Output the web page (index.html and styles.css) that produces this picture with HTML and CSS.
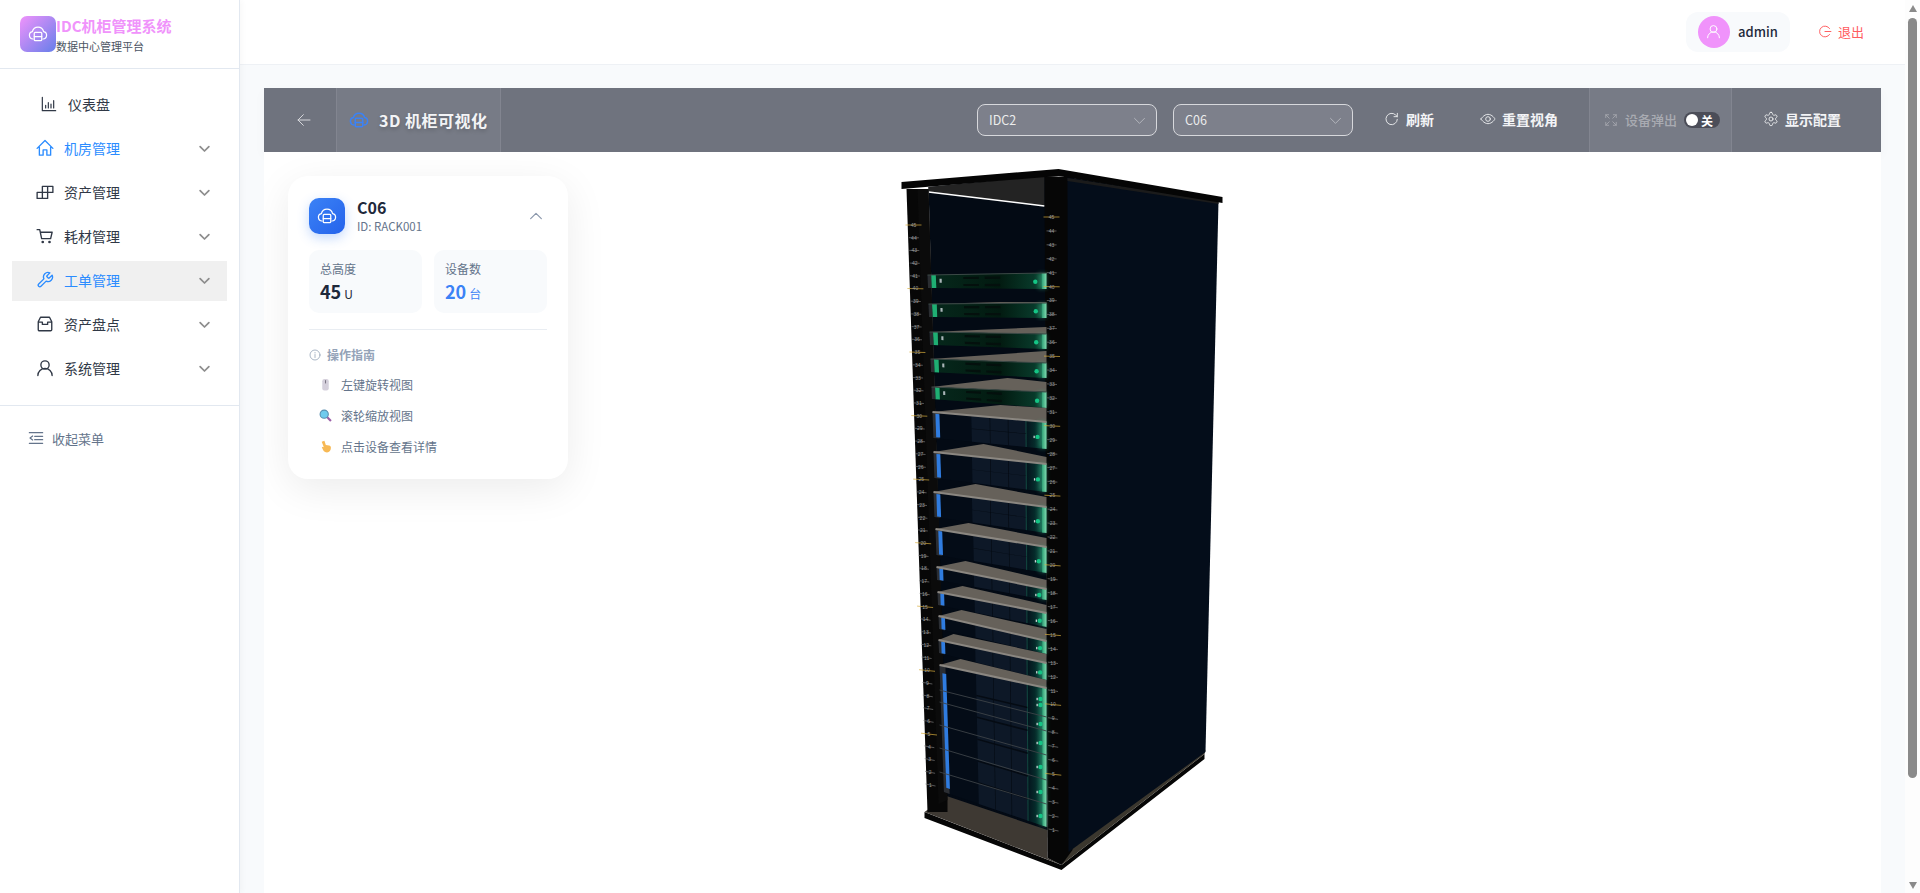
FILE: index.html
```html
<!DOCTYPE html>
<html lang="zh-CN">
<head>
    <meta charset="UTF-8">
    <meta name="viewport" content="width=device-width, initial-scale=1.0">
    <title>3D 机柜可视化</title>
    <link rel="stylesheet" href="styles.css">
</head>
<body>
    <svg class="sprite" aria-hidden="true">
        <symbol id="i-cloud" viewBox="0 0 24 24"><path d="M6 18a4.500 4.500 0 0 1-.7-8.900A6.900 6.900 0 0 1 18.700 9.100 4.500 4.500 0 0 1 18 18"/><rect x="7.500" y="10" width="9" height="10" rx="1.200"/><path d="M7.500 15h9"/></symbol>
        <symbol id="i-chart" viewBox="0 0 24 24"><path d="M2 2v20h20M7 18v-4M11 18v-8M15 18v-6M19 18V7"/></symbol>
        <symbol id="i-home" viewBox="0 0 24 24"><path d="M1.500 12.500 12 2l10.500 10.500M4.500 11v10.500h5v-7h5v7h5V11"/></symbol>
        <symbol id="i-boxes" viewBox="0 0 24 24"><path d="M1.500 12.500h14v8h-14zM8.500 12.500v8M8.500 12.500v-8h14v8h-7M15.500 4.500v8"/></symbol>
        <symbol id="i-cart" viewBox="0 0 24 24"><path d="M1.500 3.500h3.500l2.500 12h12l2-8.500H6"/><circle class="solid" cx="9" cy="20" r="1.800"/><circle class="solid" cx="18" cy="20" r="1.800"/></symbol>
        <symbol id="i-tool" viewBox="0 0 24 24"><path d="M14.700 6.300a1 1 0 0 0 0 1.400l1.600 1.600a1 1 0 0 0 1.400 0l3.770-3.770a6 6 0 0 1-7.940 7.940l-6.910 6.910a2.120 2.120 0 0 1-3-3l6.910-6.910a6 6 0 0 1 7.940-7.940l-3.760 3.760z"/></symbol>
        <symbol id="i-box" viewBox="0 0 24 24"><path d="M6 3h12l3 6v10.500a1.500 1.500 0 0 1-1.500 1.500h-15A1.500 1.500 0 0 1 3 19.500V9zM3 9.500h5.500v3h7v-3H21"/></symbol>
        <symbol id="i-user" viewBox="0 0 24 24"><circle cx="12" cy="8" r="5.500"/><path d="M2.500 22a9.500 9.500 0 0 1 19 0"/></symbol>
        <symbol id="i-down" viewBox="0 0 24 24"><path d="m5 9 7 7 7-7"/></symbol>
        <symbol id="i-up" viewBox="0 0 24 24"><path d="m4 16 8-8 8 8"/></symbol>
        <symbol id="i-fold" viewBox="0 0 24 24"><path d="M2 4h20M10 9.500h12M10 14.500h12M2 20h20M7 9l-4 3 4 3"/></symbol>
        <symbol id="i-logout" viewBox="0 0 24 24"><path d="M19.500 6.500a10 10 0 1 0 0 11M11 12h11"/></symbol>
        <symbol id="i-back" viewBox="0 0 24 24"><path d="M21 12H3M11 4l-8 8 8 8"/></symbol>
        <symbol id="i-refresh" viewBox="0 0 24 24"><path d="M20 12.500a8.500 8.500 0 1 1-2.500-6.500L20 8.500M20 3.500v5h-5"/></symbol>
        <symbol id="i-eye" viewBox="0 0 24 24"><path d="M1.500 12S5.500 5 12 5s10.500 7 10.500 7-4 7-10.500 7S1.500 12 1.500 12z"/><circle cx="12" cy="12" r="3.500"/></symbol>
        <symbol id="i-expand" viewBox="0 0 24 24"><path d="M3 3l6 6M3 8V3h5M21 3l-6 6M16 3h5v5M3 21l6-6M3 16v5h5M21 21l-6-6M16 21h5v-5"/></symbol>
        <symbol id="i-gear" viewBox="0 0 24 24"><path d="M12.220 2h-.44a2 2 0 0 0-2 2v.18a2 2 0 0 1-1 1.730l-.43.25a2 2 0 0 1-2 0l-.15-.08a2 2 0 0 0-2.730.73l-.22.38a2 2 0 0 0 .73 2.730l.15.1a2 2 0 0 1 1 1.720v.51a2 2 0 0 1-1 1.740l-.15.09a2 2 0 0 0-.73 2.730l.22.38a2 2 0 0 0 2.730.73l.15-.08a2 2 0 0 1 2 0l.43.25a2 2 0 0 1 1 1.730V20a2 2 0 0 0 2 2h.44a2 2 0 0 0 2-2v-.18a2 2 0 0 1 1-1.730l.43-.25a2 2 0 0 1 2 0l.15.08a2 2 0 0 0 2.730-.73l.22-.39a2 2 0 0 0-.73-2.730l-.15-.08a2 2 0 0 1-1-1.740v-.5a2 2 0 0 1 1-1.740l.15-.09a2 2 0 0 0 .73-2.730l-.22-.38a2 2 0 0 0-2.730-.73l-.15.08a2 2 0 0 1-2 0l-.43-.25a2 2 0 0 1-1-1.730V4a2 2 0 0 0-2-2z"/><circle cx="12" cy="12" r="3"/></symbol>
        <symbol id="i-info" viewBox="0 0 24 24"><circle cx="12" cy="12" r="10"/><path d="M12 11v6M12 7v1"/></symbol>
    </svg>

    <aside class="sidebar">
        <div class="brand">
            <div class="brand-logo"><svg class="icon"><use href="#i-cloud"/></svg></div>
            <div class="brand-text">
                <div class="brand-title">IDC机柜管理系统</div>
                <div class="brand-sub">数据中心管理平台</div>
            </div>
        </div>
        <nav class="menu">
            <a class="menu-item menu-plain"><svg class="icon menu-icon-small"><use href="#i-chart"/></svg><span>仪表盘</span></a>
            <a class="menu-item is-open"><svg class="icon menu-icon"><use href="#i-home"/></svg><span>机房管理</span><svg class="icon menu-arrow"><use href="#i-down"/></svg></a>
            <a class="menu-item"><svg class="icon menu-icon"><use href="#i-boxes"/></svg><span>资产管理</span><svg class="icon menu-arrow"><use href="#i-down"/></svg></a>
            <a class="menu-item"><svg class="icon menu-icon"><use href="#i-cart"/></svg><span>耗材管理</span><svg class="icon menu-arrow"><use href="#i-down"/></svg></a>
            <a class="menu-item is-open is-hover"><svg class="icon menu-icon"><use href="#i-tool"/></svg><span>工单管理</span><svg class="icon menu-arrow"><use href="#i-down"/></svg></a>
            <a class="menu-item"><svg class="icon menu-icon"><use href="#i-box"/></svg><span>资产盘点</span><svg class="icon menu-arrow"><use href="#i-down"/></svg></a>
            <a class="menu-item"><svg class="icon menu-icon"><use href="#i-user"/></svg><span>系统管理</span><svg class="icon menu-arrow"><use href="#i-down"/></svg></a>
        </nav>
        <div class="collapse-row"><svg class="icon"><use href="#i-fold"/></svg><span>收起菜单</span></div>
    </aside>

    <div class="main">
        <header class="topbar">
            <div class="user-pill">
                <div class="avatar"><svg class="icon"><use href="#i-user"/></svg></div>
                <span class="user-name">admin</span>
            </div>
            <div class="logout"><svg class="icon"><use href="#i-logout"/></svg><span>退出</span></div>
        </header>

        <div class="content">
            <div class="toolbar">
                <div class="tool-back"><svg class="icon"><use href="#i-back"/></svg></div>
                <div class="tool-title"><svg class="icon"><use href="#i-cloud"/></svg><span>3D 机柜可视化</span></div>
                <div class="tool-actions">
                    <div class="select"><span>IDC2</span><svg class="icon"><use href="#i-down"/></svg></div>
                    <div class="select"><span>C06</span><svg class="icon"><use href="#i-down"/></svg></div>
                    <div class="tool-btn tool-refresh"><svg class="icon"><use href="#i-refresh"/></svg><span>刷新</span></div>
                    <div class="tool-btn"><svg class="icon"><use href="#i-eye"/></svg><span>重置视角</span></div>
                    <div class="tool-popup">
                        <svg class="icon"><use href="#i-expand"/></svg>
                        <span class="popup-label">设备弹出</span>
                        <div class="switch"><i></i><span>关</span></div>
                    </div>
                    <div class="tool-btn tool-config"><svg class="icon"><use href="#i-gear"/></svg><span>显示配置</span></div>
                </div>
            </div>

            <div class="stage">
                <div id="rack" class="rack"></div>

                <div class="info-card">
                    <div class="card-head">
                        <div class="card-logo"><svg class="icon"><use href="#i-cloud"/></svg></div>
                        <div class="card-name">
                            <div class="rack-name">C06</div>
                            <div class="rack-id">ID: RACK001</div>
                        </div>
                        <svg class="icon card-toggle"><use href="#i-up"/></svg>
                    </div>
                    <div class="stats">
                        <div class="stat">
                            <div class="stat-label">总高度</div>
                            <div class="stat-value">45<small>U</small></div>
                        </div>
                        <div class="stat stat-blue">
                            <div class="stat-label">设备数</div>
                            <div class="stat-value">20<small>台</small></div>
                        </div>
                    </div>
                    <div class="guide">
                        <div class="guide-title"><svg class="icon"><use href="#i-info"/></svg><span>操作指南</span></div>
                        <div class="guide-row">
                            <svg class="guide-pic" viewBox="0 0 12 12"><rect x="3" y="1" width="6" height="10.500" rx="2" fill="#d5d0dc"/><rect x="5.600" y="2" width="0.900" height="3" fill="#77727f"/></svg>
                            <span>左键旋转视图</span>
                        </div>
                        <div class="guide-row">
                            <svg class="guide-pic" viewBox="0 0 12 12"><path d="m7 7 4 4" stroke="#9b5fa8" stroke-width="2"/><circle cx="4.800" cy="4.800" r="3.800" fill="#6fcbee" stroke="#5a8fb0"/></svg>
                            <span>滚轮缩放视图</span>
                        </div>
                        <div class="guide-row">
                            <svg class="guide-pic" viewBox="0 0 12 12"><path d="M2.500 1.500 5 .8l1.300 3.700 3 .5c1.200.3 1.700 1 1.700 2.200 0 2.300-1.300 4.300-3.600 4.300-1.600 0-2.700-.7-3.500-2L2.600 6.800l1.300-.6.700.7z" fill="#f7b955"/></svg>
                            <span>点击设备查看详情</span>
                        </div>
                    </div>
                </div>
            </div>
        </div>
    </div>

    <div class="scrollbar">
        <i class="scroll-up"></i>
        <div class="scroll-thumb"></div>
        <i class="scroll-down"></i>
    </div>

    <script src="rack.js"></script>
</body>
</html>
```

FILE: styles.css
```css
* {
    box-sizing: border-box;
}
html, body {
    height: 100%;
}
body {
    margin: 0;
    display: flex;
    overflow: hidden;
    font-family: 'Noto Sans CJK SC', 'Noto Sans', sans-serif;
    color: #1e293b;
    background-color: #f8fafc;
}
.sprite {
    position: absolute;
    width: 0;
    height: 0;
}
.icon {
    display: block;
    width: 16px;
    height: 16px;
    fill: none;
    stroke: currentColor;
    stroke-width: 1.8;
    stroke-linecap: round;
    stroke-linejoin: round;
    flex-shrink: 0;
}
.solid {
    fill: currentColor;
    stroke: none;
}

/* sidebar */
.sidebar {
    width: 240px;
    flex-shrink: 0;
    background-color: white;
    border-right: 1px solid #e2e8f0;
    box-shadow: 2px 0 6px rgba(0,0,0,0.03);
    z-index: 2;
}
.brand {
    height: 69px;
    padding: 16px 0 0 20px;
    display: flex;
    border-bottom: 1px solid #e2e8f0;
}
.brand-logo {
    width: 36px;
    height: 36px;
    border-radius: 7px;
    background: linear-gradient(135deg, #f093fb, #667eea);
    color: white;
    display: flex;
    align-items: center;
    justify-content: center;
}
.brand-logo .icon {
    width: 20px;
    height: 20px;
    stroke-width: 1.500;
}
.brand-title {
    font-size: 15px;
    line-height: 20px;
    font-weight: 600;
    color: #f093fb;
}
.brand-sub {
    font-size: 11px;
    line-height: 16px;
    margin-top: 2px;
    color: #4b5563;
}
.menu {
    padding: 16px 0;
    border-bottom: 1px solid #e2e8f0;
    display: flex;
    flex-direction: column;
    gap: 4px;
}
.menu-item {
    height: 40px;
    margin: 0 12px;
    width: 215px;
    padding: 0 15px 2px 24px;
    display: flex;
    align-items: center;
    gap: 10px;
    font-size: 14px;
    color: #303846;
}
.menu-plain {
    padding-left: 29px;
    gap: 11px;
}
.menu-icon {
    width: 18px;
    height: 18px;
}
.menu-icon-small {
    width: 16px;
    height: 16px;
}
.menu-arrow {
    width: 15px;
    height: 15px;
    margin-left: auto;
    color: #8d8d8d;
    stroke-width: 2.800;
}
.is-open {
    color: #2b8cff;
}
.is-open .menu-arrow {
    color: #8d8d8d;
}
.is-hover {
    background-color: #f0f0f0;
}
.collapse-row {
    height: 66px;
    padding: 0 0 2px 28px;
    display: flex;
    align-items: center;
    gap: 8px;
    font-size: 13px;
    color: #64748b;
}

/* main */
.main {
    flex: 1;
    min-width: 0;
    display: flex;
    flex-direction: column;
}
.topbar {
    height: 65px;
    flex-shrink: 0;
    padding-right: 41px;
    background-color: white;
    border-bottom: 1px solid #eef1f5;
    display: flex;
    align-items: center;
    justify-content: flex-end;
}
.user-pill {
    width: 104px;
    height: 40px;
    margin-top: -1px;
    padding-left: 12px;
    border-radius: 12px;
    background-color: #f8fafc;
    display: flex;
    align-items: center;
    gap: 8px;
}
.avatar {
    width: 32px;
    height: 32px;
    border-radius: 50%;
    background-color: #f093fb;
    color: white;
    display: flex;
    align-items: center;
    justify-content: center;
}
.avatar .icon {
    width: 15px;
    height: 15px;
    stroke-width: 1.600;
}
.user-name {
    font-size: 13px;
    font-weight: 500;
}
.logout {
    margin-left: 29px;
    margin-top: -1px;
    display: flex;
    align-items: center;
    gap: 6px;
    font-size: 13px;
    color: #ff5c5f;
}
.logout .icon {
    width: 13px;
    height: 13px;
}
.content {
    flex: 1;
    min-height: 0;
    padding: 23px 24px 0;
    display: flex;
    flex-direction: column;
}

/* toolbar */
.toolbar {
    height: 64px;
    flex-shrink: 0;
    background-color: #6f737e;
    color: white;
    display: flex;
    align-items: stretch;
    box-shadow: 0 4px 12px rgba(0,0,0,0.03);
}
.tool-back {
    width: 73px;
    border-right: 1px solid #828590;
    padding-left: 32px;
    display: flex;
    align-items: center;
    color: #d6d7db;
}
.tool-back .icon {
    width: 16px;
    height: 16px;
    stroke-width: 1.500;
}
.tool-title {
    width: 164px;
    padding-left: 12px;
    background-color: #777b86;
    border-right: 1px solid #828590;
    display: flex;
    align-items: center;
    gap: 10px;
    font-size: 16px;
    font-weight: 600;
    color: #f3f4f6;
    text-shadow: 0 2px 4px rgba(0,0,0,0.2);
    letter-spacing: 0.5px;
}
.tool-title .icon {
    width: 20px;
    height: 20px;
    color: #3b82f6;
    stroke-width: 1.800;
}
.tool-actions {
    flex: 1;
    padding-left: 476px;
    display: flex;
    align-items: center;
    height: 100%;
}
.select {
    width: 180px;
    height: 32px;
    margin-right: 16px;
    padding: 0 8px 0 11px;
    border: 1px solid #d7d8dc;
    border-radius: 8px;
    background-color: #7d808b;
    display: flex;
    align-items: center;
    justify-content: space-between;
    font-size: 12.5px;
    color: #eceded;
}
.select span {
    padding-bottom: 2px;
}
.select .icon {
    width: 17px;
    height: 17px;
    stroke-width: 1;
    color: #c8cad0;
}
.tool-btn {
    padding: 0 15px 2px;
    display: flex;
    align-items: center;
    gap: 6px;
    font-size: 14px;
    font-weight: 600;
    color: #f3f4f6;
}
.tool-btn .icon {
    width: 16px;
    height: 16px;
    stroke-width: 1.300;
}
.tool-refresh {
    margin-right: 16px;
}
.tool-popup {
    width: 143px;
    height: 100%;
    margin-left: 16px;
    padding-left: 14px;
    background-color: #777b86;
    border-left: 1px solid #828590;
    border-right: 1px solid #828590;
    display: flex;
    align-items: center;
    gap: 7px;
    font-size: 13px;
    color: #a9abb2;
}
.tool-popup .icon {
    width: 14px;
    height: 14px;
    stroke-width: 1.400;
}
.popup-label {
    padding-bottom: 2px;
    font-weight: 500;
}
.switch {
    width: 36px;
    height: 16px;
    padding: 0 2px;
    border-radius: 8px;
    background-color: #4b4d58;
    display: flex;
    align-items: center;
    gap: 3px;
    font-size: 12px;
    font-weight: 600;
    color: white;
}
.switch i {
    width: 12px;
    height: 12px;
    border-radius: 50%;
    background-color: white;
}
.tool-config {
    margin-left: 16px;
}

/* 3d stage */
.stage {
    position: relative;
    flex: 1;
    min-height: 0;
    overflow: hidden;
    background-color: white;
}
.rack {
    display: flex;
    justify-content: center;
}
.rack svg {
    display: block;
    width: 360px;
    height: 741px;
}
.rack text {
    font-family: 'Liberation Sans', sans-serif;
    font-size: 5px;
    fill: #9a9a9a;
    text-anchor: middle;
}
.info-card {
    position: absolute;
    left: 24px;
    top: 24px;
    width: 280px;
    height: 303px;
    padding: 21px;
    border-radius: 20px;
    background-color: white;
    box-shadow: 0 10px 40px rgba(0,0,0,0.08);
}
.card-head {
    display: flex;
    align-items: center;
}
.card-logo {
    width: 36px;
    height: 36px;
    border-radius: 10px;
    background: linear-gradient(135deg, #3b82f6, #2563eb);
    box-shadow: 0 4px 12px rgba(59,130,246,0.3);
    color: white;
    display: flex;
    align-items: center;
    justify-content: center;
}
.card-logo .icon {
    width: 20px;
    height: 20px;
    stroke-width: 1.500;
}
.card-name {
    margin-left: 12px;
    flex: 1;
}
.rack-name {
    font-size: 16px;
    line-height: 20px;
    font-weight: 600;
}
.rack-id {
    font-size: 11.5px;
    line-height: 18px;
    color: #64748b;
}
.card-toggle {
    width: 16px;
    height: 16px;
    margin-right: 3px;
    color: #8a97ab;
    stroke-width: 1.800;
}
.stats {
    margin-top: 15px;
    padding-bottom: 16px;
    border-bottom: 1px solid #e9edf2;
    display: grid;
    grid-template-columns: 113px 113px;
    gap: 12px;
}
.stat {
    height: 63px;
    padding: 11px 11px 0;
    border-radius: 10px;
    background-color: #f8fafc;
}
.stat-label {
    font-size: 12px;
    line-height: 16px;
    color: #64748b;
}
.stat-value {
    margin-top: 2px;
    font-size: 18px;
    line-height: 24px;
    font-weight: 600;
}
.stat-value small {
    margin-left: 3px;
    font-size: 12px;
    font-weight: 400;
}
.stat-blue .stat-value {
    color: #3b82f6;
}
.guide {
    padding-top: 16px;
}
.guide-title {
    display: flex;
    align-items: center;
    gap: 6px;
    font-size: 12px;
    line-height: 18px;
    font-weight: 600;
    color: #94a3b8;
}
.guide-title .icon {
    width: 12px;
    height: 12px;
    stroke-width: 1.600;
}
.guide-row {
    height: 31px;
    padding-left: 10px;
    display: flex;
    align-items: center;
    gap: 9px;
    font-size: 12px;
    color: #64748b;
}
.guide-title + .guide-row {
    margin-top: 5px;
}
.guide-pic {
    width: 13px;
    height: 13px;
}

/* browser scrollbar */
.scrollbar {
    width: 15px;
    flex-shrink: 0;
    padding: 5px 3px 4px;
    background-color: #fdfdfd;
    display: flex;
    flex-direction: column;
    align-items: center;
}
.scroll-up, .scroll-down {
    width: 0;
    height: 0;
    border-left: 4.5px solid transparent;
    border-right: 4.5px solid transparent;
}
.scroll-up {
    border-bottom: 7px solid #8a8a8a;
}
.scroll-down {
    margin-top: auto;
    border-top: 7px solid #8a8a8a;
}
.scroll-thumb {
    width: 9px;
    height: 760px;
    margin-top: 6px;
    border-radius: 5px;
    background-color: #8a8a8a;
}
```

FILE: rack.js
```js
// Draws the cabinet. Coordinates are page pixels, the viewBox maps them onto the stage.
const RIGHT_X = 1046;

// lx: front left x, lt/lb: left top/bottom y, rt/rb: right top/bottom y
// shelf: [peak x, peak y, y of the back edge at the right post]
const devices = [
    { type: 'green', lx: 927, lt: 275, lb: 288, rt: 273, rb: 289 },
    { type: 'green', lx: 928, lt: 304, lb: 317, rt: 303, rb: 318, shelf: [1000, 302, 302] },
    { type: 'green', lx: 929, lt: 332, lb: 345, rt: 334, rb: 349, shelf: [1045, 327, 327] },
    { type: 'green', lx: 930, lt: 359, lb: 372, rt: 363, rb: 378, shelf: [1045, 351, 351] },
    { type: 'green', lx: 931, lt: 387, lb: 399, rt: 392, rb: 408, shelf: [1007, 378, 382] },
    { type: 'blue', lx: 932, lt: 412, lb: 438, rt: 422, rb: 449, shelf: [1000, 405, 408] },
    { type: 'blue', lx: 933, lt: 452, lb: 478, rt: 464, rb: 492, shelf: [983, 444, 457] },
    { type: 'blue', lx: 933, lt: 492, lb: 517, rt: 507, rb: 533, shelf: [975, 484, 497] },
    { type: 'blue', lx: 935, lt: 529, lb: 555, rt: 547, rb: 573, shelf: [968, 523, 538] },
    { type: 'blue', lx: 936, lt: 567, lb: 580, rt: 589, rb: 600, shelf: [965, 561, 580] },
    { type: 'blue', lx: 937, lt: 592, lb: 605, rt: 613, rb: 627, shelf: [962, 586, 605] },
    { type: 'blue', lx: 938, lt: 616, lb: 629, rt: 641, rb: 654, shelf: [961, 610, 629] },
    { type: 'blue', lx: 938, lt: 640, lb: 653, rt: 663, rb: 680, shelf: [953, 634, 654] },
    {
        type: 'blue', lx: 939, lt: 665, lb: 792, rt: 688, rb: 827, shelf: [960, 659, 680],
        rows: [690, 702, 725, 748, 772], rowsRight: [717, 731, 755, 780, 804],
        leds: [699, 705, 724, 743, 767, 792, 816]
    }
];

function poly(points, fill, extra) {
    const d = points.map(p => p[0].toFixed(1) + ',' + p[1].toFixed(1)).join(' ');
    return `<polygon points="${d}" fill="${fill}" ${extra || ''}/>`;
}

function drawPanel(dev, u0, u1, v0, v1, fill, extra) {
    // the front of a device leans a little: lower edge sits further right on its left end
    const lean = (dev.lb - dev.lt) * 0.035;
    const at = (u, v) => {
        const top = dev.lt + u * (dev.rt - dev.lt);
        const bottom = dev.lb + u * (dev.rb - dev.lb);
        return [dev.lx + u * (RIGHT_X - dev.lx) + v * lean * (1 - u), top + v * (bottom - top)];
    };
    return poly([at(u0, v0), at(u1, v0), at(u1, v1), at(u0, v1)], fill, extra);
}

function drawDevice(dev) {
    let html = '';
    const rows = dev.rows ? 6 : dev.lb - dev.lt > 20 ? 2 : 1;
    const ledX = 1037 + (dev.lx - 932) * 0.43;

    if (dev.shelf) {
        html += poly([[dev.lx, dev.lt], [dev.shelf[0], dev.shelf[1]], [RIGHT_X, dev.shelf[2]], [RIGHT_X, dev.rt]], '#66615a');
    }
    html += drawPanel(dev, 0, 1, 0, 1, '#040c17');

    if (dev.type === 'green') {
        html += drawPanel(dev, 0.03, 0.98, 0, 1, 'url(#greenFace)');
        html += drawPanel(dev, 0.03, 0.07, 0, 1, '#1fae73');
        html += drawPanel(dev, 0, 0.03, 0, 1, '#2a2d31');
        html += drawPanel(dev, 0.1, 0.118, 0.3, 0.6, '#aab5b8');
        [[0.3, 0.18], [0.48, 0.18], [0.3, 0.68], [0.48, 0.68]].forEach(c => {
            html += drawPanel(dev, c[0], c[0] + 0.13, c[1], c[1] + 0.16, '#04100d');
        });
    } else {
        html += drawPanel(dev, 0.34, 0.82, 0, 1, '#0d1827');
        html += drawPanel(dev, 0.82, 0.98, 0, 1, 'url(#tealFace)');
        [0.5, 0.66].forEach(u => {
            html += drawPanel(dev, u, u + 0.006, 0, 1, '#050b13');
        });
        html += drawPanel(dev, 0.815, 0.825, 0, 1, '#12463f');
        for (let r = 1; r < rows; r++) {
            html += drawPanel(dev, 0.34, 0.82, r / rows, r / rows + 0.012, '#050b13');
        }
        html += drawPanel(dev, 0, 0.055, 0, 1, '#2b2e33');
        html += drawPanel(dev, 0.025, 0.06, 0.06, 0.96, '#2f7ce0');
    }

    // lit bar and status led on the right end
    html += drawPanel(dev, 0.93, 1, 0, 1, '#3fc08f', 'opacity="0.45" filter="url(#soft)"');
    html += drawPanel(dev, 0.96, 1, 0, 1, 'url(#barFace)');

    const ledYs = dev.leds || [dev.rt + 0.55 * (dev.rb - dev.rt)];
    ledYs.forEach(y => {
        html += `<circle cx="${ledX.toFixed(1)}" cy="${y.toFixed(1)}" r="2.2" fill="#14c585"/>`;
        if (dev.type === 'blue') {
            html += `<rect x="${(ledX - 4).toFixed(1)}" y="${(y - 1.2).toFixed(1)}" width="1.3" height="2.4" fill="#c9d6d6"/>`;
        }
    });

    if (dev.rows) {
        dev.rows.forEach((y, i) => {
            html += `<line x1="${dev.lx}" y1="${y}" x2="${RIGHT_X}" y2="${dev.rowsRight[i]}" stroke="#3d4347" stroke-width="0.9"/>`;
        });
    }

    // front lip of the shelf
    html += `<line x1="${dev.lx}" y1="${dev.lt}" x2="${RIGHT_X}" y2="${dev.rt}" stroke="${dev.shelf && dev.type === 'blue' ? '#8b8781' : '#3c4a47'}" stroke-width="${dev.type === 'blue' ? 2 : 1}"/>`;
    return html;
}

function drawTicks(x45, y45, x1, y1, lean) {
    let html = '';
    for (let u = 45; u >= 1; u--) {
        const t = (45 - u) / 44;
        const x = x45 + t * (x1 - x45);
        const y = y45 + t * (y1 - y45);
        const major = u % 5 === 0;
        const half = major ? 8 : 5;
        const tilt = lean * t;
        html += `<line x1="${(x - half).toFixed(1)}" y1="${(y - tilt).toFixed(1)}" x2="${(x + half).toFixed(1)}" y2="${(y + tilt).toFixed(1)}" stroke="${major ? '#d8ae3c' : '#777'}" stroke-width="0.7"/>`;
        html += `<text x="${x.toFixed(1)}" y="${(y + 1.8).toFixed(1)}">${u}</text>`;
    }
    return html;
}

function drawRack() {
    let html = `<svg viewBox="892.5 152 360 741" xmlns="http://www.w3.org/2000/svg">
        <defs>
            <filter id="soft" x="-50%" y="-20%" width="200%" height="140%">
                <feGaussianBlur stdDeviation="2"/>
            </filter>
            <linearGradient id="greenFace" x1="0" x2="1" y1="0" y2="0">
                <stop offset="0" stop-color="#06281c"/>
                <stop offset="0.6" stop-color="#021a10"/>
                <stop offset="1" stop-color="#0a4231"/>
            </linearGradient>
            <linearGradient id="tealFace" x1="0" x2="1" y1="0" y2="0">
                <stop offset="0" stop-color="#04121c"/>
                <stop offset="1" stop-color="#07463a"/>
            </linearGradient>
            <linearGradient id="barFace" x1="0" x2="1" y1="0" y2="0">
                <stop offset="0" stop-color="#2f9f75"/>
                <stop offset="1" stop-color="#7fdcb0"/>
            </linearGradient>
        </defs>`;

    // plinth and floor
    html += poly([[924, 812], [1061, 865], [1204, 754], [1204, 759], [1061, 870], [924, 818]], '#060606');
    html += poly([[924, 812], [948, 795], [1047, 827], [1047, 858], [1061, 865], [945, 820]], '#3e3933');
    html += poly([[1068, 851], [1205, 750], [1204, 754], [1061, 865]], '#3b372e');

    // back wall, roof underside and the lit edge
    html += poly([[928, 187], [1045, 176], [1047, 830], [946, 796]], '#030a14');
    html += poly([[928, 187], [1044, 176], [1044, 206], [928, 192]], '#232323');
    html += '<line x1="928" y1="192" x2="1044" y2="206" stroke="white" stroke-width="1.6"/>';

    // posts, the right one runs under the side panel
    html += poly([[906, 189], [928, 189], [947, 800], [947, 812], [927, 812]], '#070707');
    html += poly([[917, 189], [928, 189], [947, 800], [938, 804]], '#0b0b0b');
    html += poly([[1044, 176], [1071, 177], [1072, 850], [1061, 865], [1047, 858]], '#060606');

    // side panel
    html += poly([[1067, 177], [1218, 201], [1205, 752], [1068, 852]], '#040d1a');

    devices.forEach(dev => {
        html += drawDevice(dev);
    });

    // roof
    html += poly([[1067, 178], [1218, 201], [1218, 204], [1067, 181]], '#1b1b1b');
    html += poly([[901, 182], [1058, 169], [1222, 197], [1222, 203], [1058, 176], [901, 189]], '#050505');

    html += drawTicks(913, 225, 930, 785, 1);
    html += drawTicks(1051, 217, 1053, 830, 1);

    document.getElementById('rack').innerHTML = html + '</svg>';
}

drawRack();
```
